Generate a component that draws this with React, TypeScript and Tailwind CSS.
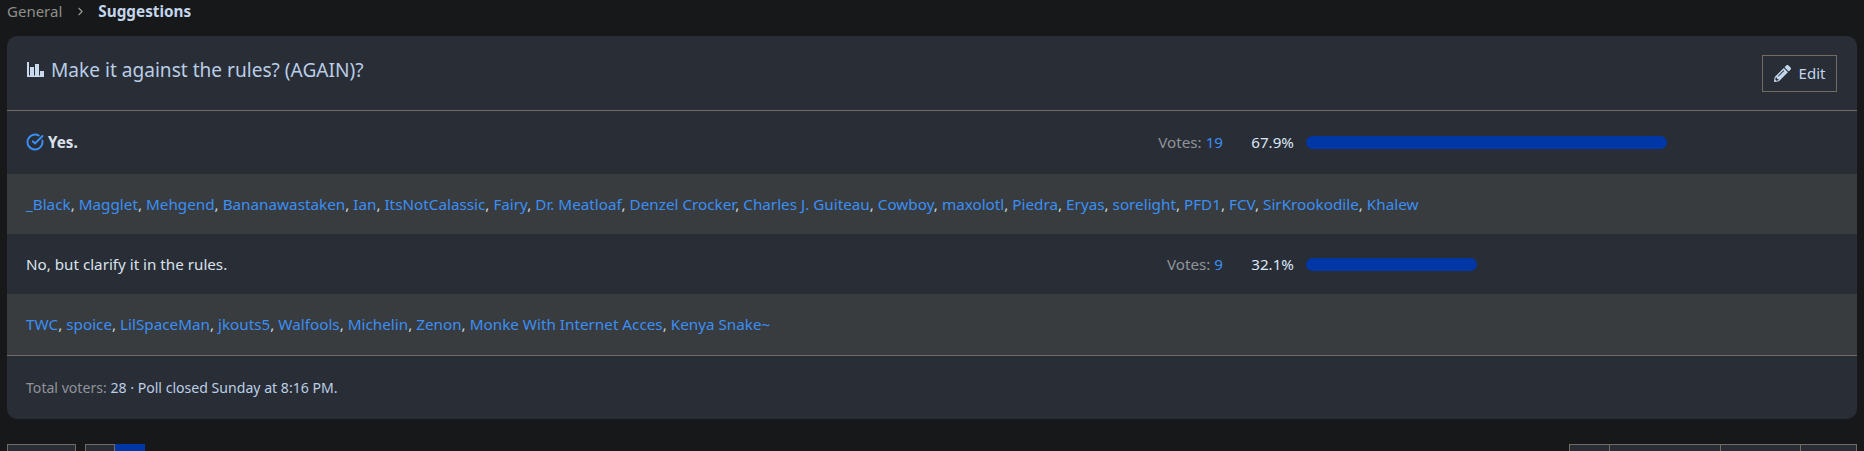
import { ChevronRight, CircleCheckBig } from 'lucide-react';
import { FaPencilAlt } from 'react-icons/fa';

const yesVoters = ['_Black', 'Magglet', 'Mehgend', 'Bananawastaken', 'Ian', 'ItsNotCalassic', 'Fairy', 'Dr. Meatloaf', 'Denzel Crocker', 'Charles J. Guiteau', 'Cowboy', 'maxolotl', 'Piedra', 'Eryas', 'sorelight', 'PFD1', 'FCV', 'SirKrookodile', 'Khalew'];
const noVoters = ['TWC', 'spoice', 'LilSpaceMan', 'jkouts5', 'Walfools', 'Michelin', 'Zenon', 'Monke With Internet Acces', 'Kenya Snake~'];

function VoterRow({ names, height }: { names: string[]; height: string }) {
  return (
    <div className={`${height} px-[19px] flex items-center bg-[#383c3f] text-[15.25px] text-[#3b8ff5]`}>
      <p>
        {names.map((name, i) => (
          <span key={name}>
            <a>{name}</a>
            {i < names.length - 1 && <span className="text-[#c9d3de]">, </span>}
          </span>
        ))}
      </p>
    </div>
  );
}

function ResultRow({ votes, percent, barWidth, height, children }: { votes: number; percent: string; barWidth: number; height: string; children: React.ReactNode }) {
  return (
    <div className={`${height} pl-[19px] pr-[190px] flex items-center text-[15.2px]`}>
      <div className="flex-1 flex items-center text-[#d9e2ec]">{children}</div>
      <span className="text-[#8f9499]">Votes: <span className="text-[#3b8ff5]">{votes}</span></span>
      <span className="w-[71px] text-right text-[#d9e6f5]">{percent}</span>
      <div className="w-[361px] ml-[12px] h-[13px]">
        <div className="h-full rounded-full bg-[#0037a6]" style={{ width: barWidth }} />
      </div>
    </div>
  );
}

export default function App() {
  return (
    <div className="w-[1864px] h-[451px] overflow-hidden bg-[#17181a] font-['Noto_Sans',sans-serif]">
      {/* Breadcrumb */}
      <div className="h-[36px] pl-[7px] pb-[13px] flex items-center text-[15px]">
        <span className="text-[#8f8f8a]">General</span>
        <ChevronRight className="w-[13px] h-[13px] ml-[12px] mr-[11px] text-[#9a9a95]" />
        <span className="font-bold text-[15.3px] text-[#c3d5ea]">Suggestions</span>
      </div>

      {/* Poll card */}
      <div className="mx-[7px] h-[383px] rounded-[10px] overflow-hidden bg-[#292d36] flex flex-col">
        <div className="h-[75px] pl-[20px] pr-[20px] flex items-center justify-between border-b border-[#736c62]">
          <div className="flex items-center gap-[7px] -mt-[6px] text-[19.1px] text-[#b9cde6]">
            <svg width="17" height="15" viewBox="0 0 17 15" className="text-[#c9daee]" fill="currentColor">
              <rect x="0" y="0" width="2" height="15" />
              <rect x="0" y="13.5" width="17" height="1.5" />
              <rect x="3" y="5" width="4" height="9" />
              <rect x="8" y="2" width="4" height="12" />
              <rect x="13" y="9" width="4" height="5" />
            </svg>
            <span>Make it against the rules? (AGAIN)?</span>
          </div>
          <button className="w-[75px] h-[37px] mt-[1px] border border-[#736c62] flex items-center justify-center gap-[8px] text-[15px] text-[#c3d5ea]">
            <FaPencilAlt className="w-[17px] h-[17px]" />
            <span>Edit</span>
          </button>
        </div>

        <ResultRow votes={19} percent="67.9%" barWidth={361} height="h-[63px]">
          <CircleCheckBig className="w-[18px] h-[18px] mr-[4px] text-[#3b8ff5]" strokeWidth={2.5} />
          <span className="font-bold">Yes.</span>
        </ResultRow>
        <VoterRow names={yesVoters} height="h-[60px]" />
        <ResultRow votes={9} percent="32.1%" barWidth={171} height="h-[60px]">
          <span>No, but clarify it in the rules.</span>
        </ResultRow>
        <VoterRow names={noVoters} height="h-[61px]" />

        <div className="flex-1 px-[19px] flex items-center border-t border-[#736c62] text-[14.1px] text-[#bccfe5]">
          <span className="text-[#8f9499]">Total voters:&nbsp;</span>
          <span>28 · Poll closed Sunday at 8:16 PM.</span>
        </div>
      </div>

      {/* Pagination tops, cut off by the window edge */}
      <div className="mt-[25px] mx-[7px] flex justify-between">
        <div className="flex gap-[9px]">
          <div className="w-[69px] h-[30px] border border-[#736c62] bg-[#292d36]" />
          <div className="flex">
            <div className="w-[30px] h-[30px] border border-[#736c62] bg-[#292d36]" />
            <div className="w-[30px] h-[30px] bg-[#0037a6]" />
          </div>
        </div>
        <div className="flex border border-[#736c62] divide-x divide-[#736c62] bg-[#292d36] h-[30px]">
          <div className="w-[40px]" />
          <div className="w-[111px]" />
          <div className="w-[80px]" />
          <div className="w-[55px]" />
        </div>
      </div>
    </div>
  );
}
